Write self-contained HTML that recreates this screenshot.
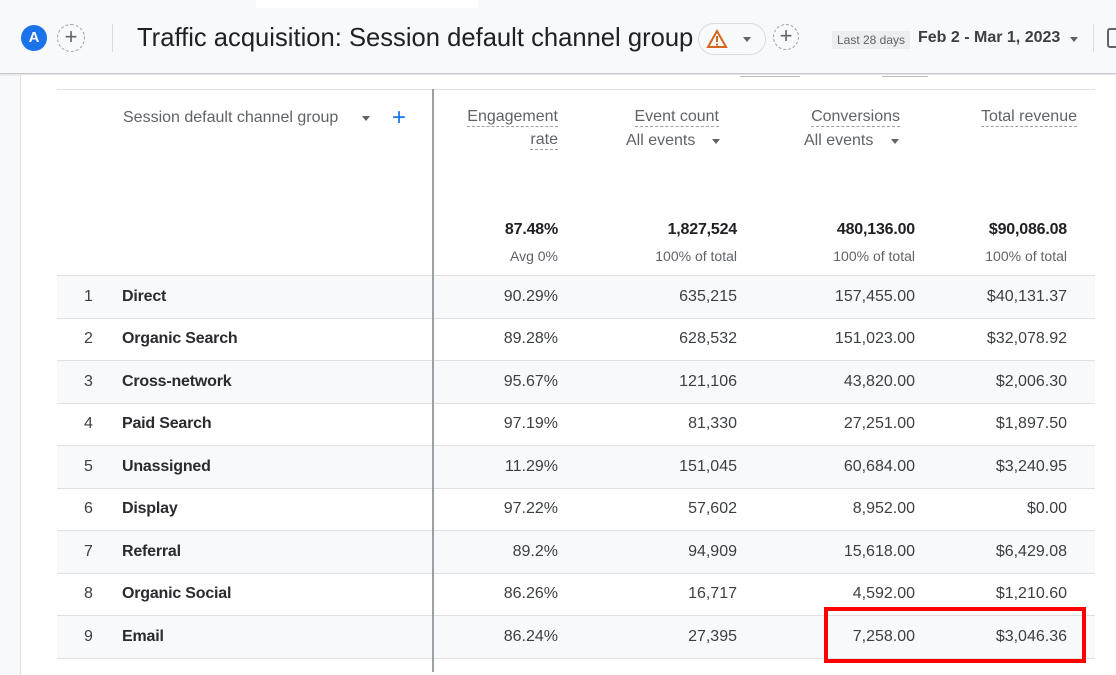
<!DOCTYPE html>
<html><head><meta charset="utf-8"><style>
*{margin:0;padding:0;box-sizing:border-box}
body{width:1116px;height:672px;overflow:hidden;background:#f8f9fa;font-family:"Liberation Sans",Arial,sans-serif;color:#202124;position:relative}
.a{position:absolute;white-space:nowrap}
.hdr{position:absolute;left:0;top:0;width:1116px;height:74px;background:#f8f9fa;border-bottom:1px solid #c8c9cc;box-shadow:0 1px 2px rgba(0,0,0,.12)}
.card{position:absolute;left:20px;top:75px;width:1100px;height:600px;background:#fff;border-left:1px solid #e0e0e0}
.row{position:absolute;left:57px;width:1038px;height:43px;border-bottom:1px solid #e0e0e0;font-size:16px}
.row.s{background:#f8f9fa}
.r{position:absolute;text-align:right;top:12px;color:#3c4043}
.n{position:absolute;left:27px;top:12px;color:#3c4043}
.l{position:absolute;left:65px;top:12px;font-weight:bold;color:#2a2b2e;letter-spacing:-0.2px}
.h{font-size:16px;color:#5f6368;text-align:right;border-bottom:1.5px dashed #9aa0a6;line-height:19px}
.tri{position:absolute;width:0;height:0;border-left:4.5px solid transparent;border-right:4.5px solid transparent;border-top:5px solid #5f6368}
.t{font-size:16px;font-weight:bold;color:#202124;letter-spacing:-0.2px}
</style></head><body>
<div class="hdr">
<div class="a" style="left:256px;top:0;width:222px;height:8px;background:#fff"></div>
<div class="a" style="left:21px;top:25px;width:26px;height:26px;border-radius:50%;background:#1a73e8;color:#fff;font-size:15px;font-weight:bold;text-align:center;line-height:26px">A</div>
<div class="a" style="left:57px;top:24px;width:28px;height:28px;border-radius:50%;border:1px dashed #9aa0a6;text-align:center;line-height:24px;font-size:22px;color:#5f6368">+</div>
<div class="a" style="left:112px;top:24px;width:1px;height:28px;background:#dadce0"></div>
<div class="a" style="left:137px;top:24px;font-size:25.6px;color:#202124">Traffic acquisition: Session default channel group</div>
<div class="a" style="left:698px;top:23px;width:68px;height:32px;border:1px solid #dadce0;border-radius:16px"></div>
<svg class="a" style="left:706px;top:29px" width="22" height="20" viewBox="0 0 22 20"><path d="M11 2 L20 18 L2 18 Z" fill="none" stroke="#d1661c" stroke-width="2"/><rect x="10" y="7" width="2" height="6" fill="#d1661c"/><rect x="10" y="14.5" width="2" height="2" fill="#d1661c"/></svg>
<span class="tri" style="left:743px;top:37px"></span>
<div class="a" style="left:773px;top:24px;width:26px;height:26px;border-radius:50%;border:1px dashed #9aa0a6;text-align:center;line-height:22px;font-size:22px;color:#5f6368">+</div>
<div class="a" style="left:832px;top:31px;width:78px;height:18px;background:#eceef0;font-size:12px;color:#5f6368;text-align:center;line-height:18px">Last 28 days</div>
<div class="a" style="left:918px;top:29px;font-size:16px;font-weight:bold;color:#3c4043">Feb 2 - Mar 1, 2023</div>
<span class="tri" style="left:1070px;top:37px"></span>
<div class="a" style="left:1093px;top:24px;width:1px;height:28px;background:#dadce0"></div>
<div class="a" style="left:1107px;top:28px;width:12px;height:20px;border:2px solid #5f6368;border-radius:3px"></div>
</div>
<div class="card"></div>
<div class="a" style="left:57px;top:89px;width:1038px;height:1px;background:#e0e0e0"></div>
<div class="a" style="left:740px;top:76px;width:60px;height:1px;background:#bbb"></div>
<div class="a" style="left:882px;top:76px;width:46px;height:1px;background:#bbb"></div>
<div class="a" style="left:123px;top:109px;font-size:16px;color:#5f6368">Session default channel group</div>
<span class="tri" style="left:362px;top:116px"></span>
<div class="a" style="left:392px;top:104px;font-size:24px;color:#1a73e8">+</div>
<div class="a h" style="right:558px;top:107px">Engagement</div>
<div class="a h" style="right:558px;top:130px">rate</div>
<div class="a h" style="right:397px;top:107px">Event count</div>
<div class="a" style="left:626px;top:132px;font-size:16px;color:#5f6368">All events</div>
<span class="tri" style="left:712px;top:139px"></span>
<div class="a h" style="right:216px;top:107px">Conversions</div>
<div class="a" style="left:804px;top:132px;font-size:16px;color:#5f6368">All events</div>
<span class="tri" style="left:891px;top:139px"></span>
<div class="a h" style="right:39px;top:107px">Total revenue</div>
<div class="a t" style="right:558px;top:221px">87.48%</div>
<div class="a t" style="right:379px;top:221px">1,827,524</div>
<div class="a t" style="right:201px;top:221px">480,136.00</div>
<div class="a t" style="right:49px;top:221px">$90,086.08</div>
<div class="a" style="right:558px;top:248px;font-size:14px;color:#5f6368">Avg 0%</div>
<div class="a" style="right:379px;top:248px;font-size:14px;color:#5f6368">100% of total</div>
<div class="a" style="right:201px;top:248px;font-size:14px;color:#5f6368">100% of total</div>
<div class="a" style="right:49px;top:248px;font-size:14px;color:#5f6368">100% of total</div>
<div class="a" style="left:57px;top:275px;width:1038px;height:1px;background:#e0e0e0"></div>

<div class="row s" style="top:276px"><span class="n">1</span><span class="l">Direct</span><span class="r" style="right:537px">90.29%</span><span class="r" style="right:358px">635,215</span><span class="r" style="right:180px">157,455.00</span><span class="r" style="right:28px">$40,131.37</span></div>
<div class="row" style="top:318px"><span class="n">2</span><span class="l">Organic Search</span><span class="r" style="right:537px">89.28%</span><span class="r" style="right:358px">628,532</span><span class="r" style="right:180px">151,023.00</span><span class="r" style="right:28px">$32,078.92</span></div>
<div class="row s" style="top:361px"><span class="n">3</span><span class="l">Cross-network</span><span class="r" style="right:537px">95.67%</span><span class="r" style="right:358px">121,106</span><span class="r" style="right:180px">43,820.00</span><span class="r" style="right:28px">$2,006.30</span></div>
<div class="row" style="top:403px"><span class="n">4</span><span class="l">Paid Search</span><span class="r" style="right:537px">97.19%</span><span class="r" style="right:358px">81,330</span><span class="r" style="right:180px">27,251.00</span><span class="r" style="right:28px">$1,897.50</span></div>
<div class="row s" style="top:446px"><span class="n">5</span><span class="l">Unassigned</span><span class="r" style="right:537px">11.29%</span><span class="r" style="right:358px">151,045</span><span class="r" style="right:180px">60,684.00</span><span class="r" style="right:28px">$3,240.95</span></div>
<div class="row" style="top:488px"><span class="n">6</span><span class="l">Display</span><span class="r" style="right:537px">97.22%</span><span class="r" style="right:358px">57,602</span><span class="r" style="right:180px">8,952.00</span><span class="r" style="right:28px">$0.00</span></div>
<div class="row s" style="top:531px"><span class="n">7</span><span class="l">Referral</span><span class="r" style="right:537px">89.2%</span><span class="r" style="right:358px">94,909</span><span class="r" style="right:180px">15,618.00</span><span class="r" style="right:28px">$6,429.08</span></div>
<div class="row" style="top:573px"><span class="n">8</span><span class="l">Organic Social</span><span class="r" style="right:537px">86.26%</span><span class="r" style="right:358px">16,717</span><span class="r" style="right:180px">4,592.00</span><span class="r" style="right:28px">$1,210.60</span></div>
<div class="row s" style="top:616px"><span class="n">9</span><span class="l">Email</span><span class="r" style="right:537px">86.24%</span><span class="r" style="right:358px">27,395</span><span class="r" style="right:180px">7,258.00</span><span class="r" style="right:28px">$3,046.36</span></div>

<div class="a" style="left:432px;top:89px;width:2px;height:583px;background:#9aa0a6"></div>
<div class="a" style="left:824px;top:607px;width:262px;height:56px;border:4px solid #f00"></div>
</body></html>
